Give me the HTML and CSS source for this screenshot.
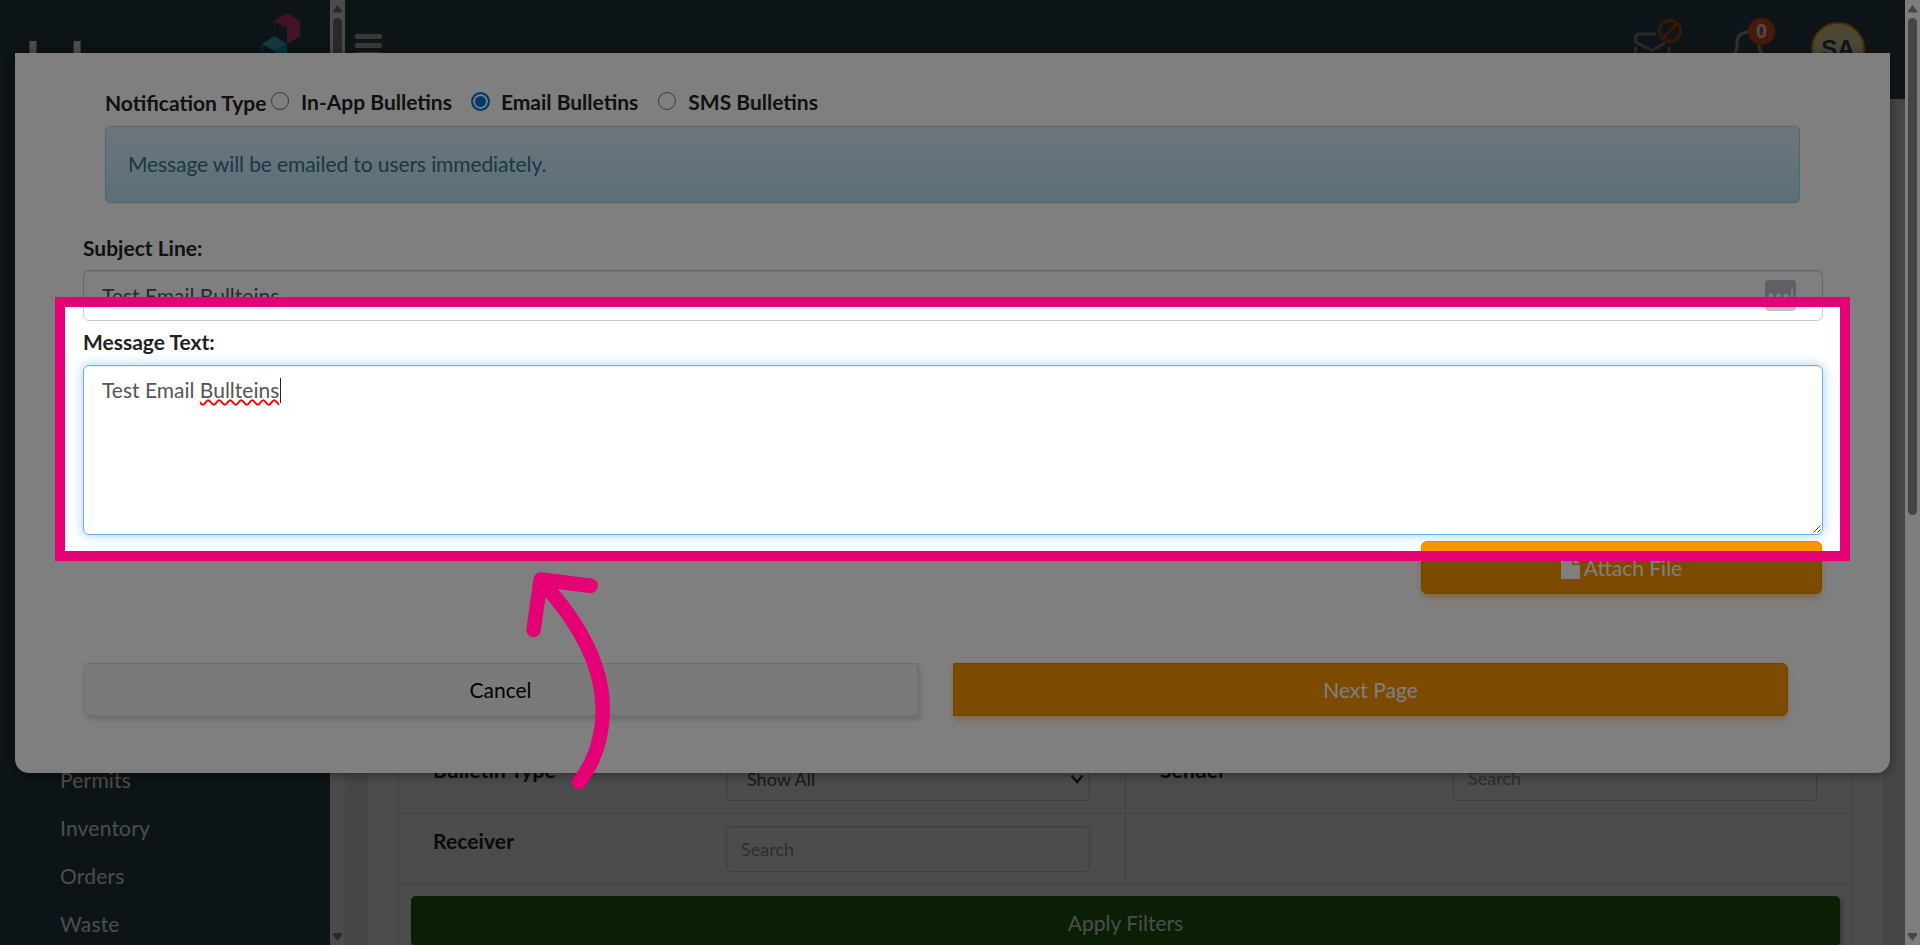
FILE: index.html
```html
<!DOCTYPE html>
<html lang="en">
<head>
    <meta charset="UTF-8">
    <meta name="viewport" content="width=device-width, initial-scale=1.0">
    <title>Bulletins</title>
    <link rel="stylesheet" href="styles.css">
</head>
<body>
    <div class="page">
        <aside class="sidebar">
            <div class="logo">
                <span class="logo-text"><span class="tight">la</span><span class="wide">b</span>case</span>
                <svg class="logo-mark" width="40" height="60" viewBox="0 0 40 60">
                    <path d="M25 0L38 8L25 15L12 8Z" fill="#db3b82"/>
                    <path d="M25 15L38 8V23L25 31Z" fill="#e8407f"/>
                    <path d="M12.500 8V15" stroke="#db3b82"/>
                    <path d="M12.500 23L25 31L12.500 38L0 31Z" fill="#4bb9cb"/>
                    <path d="M12.500 38L25 31V46L12.500 53Z" fill="#00a9c0"/>
                    <path d="M0.500 31V38" stroke="#4bb9cb"/>
                </svg>
            </div>
            <nav class="side-menu">
                <a>Permits</a>
                <a>Inventory</a>
                <a>Orders</a>
                <a>Waste</a>
            </nav>
        </aside>
        <div class="scrollbar">
            <svg width="9" height="8" viewBox="0 0 9 8"><path d="M4.500 0L9 6V7.500H0V6Z"/></svg>
            <div class="thumb side-thumb"></div>
            <svg width="9" height="8" viewBox="0 0 9 8"><path d="M4.500 8L9 2V0H0V2Z"/></svg>
        </div>
        <main class="main">
            <header class="topbar">
                <div class="burger"><i></i><i></i><i></i></div>
                <div class="top-icons">
                    <svg class="mail" width="50" height="46" viewBox="0 0 50 46" fill="none">
                        <path d="M23 15H7Q2.500 15 2.500 19V23L19 31.500L32 24M2.500 28V44M36 28V44" stroke="#848e96" stroke-width="3"/>
                        <circle cx="37" cy="12" r="10.500" stroke="#b8550f" stroke-width="3"/>
                        <path d="M30 19L44 5" stroke="#b8550f" stroke-width="3"/>
                    </svg>
                    <div class="bell">
                        <svg width="34" height="34" viewBox="0 0 34 34" fill="none">
                            <path d="M2 26Q5 23 5 16Q5 4 17 4Q28 4 27 16Q27 23 31 26" stroke="#a5a5a5" stroke-width="3"/>
                        </svg>
                        <span class="badge">0</span>
                    </div>
                    <div class="avatar">SA</div>
                </div>
            </header>
            <section class="card">
                <div class="filters">
                    <div class="cell">
                        <b>Bulletin Type</b>
                        <div class="field select">Show All
                            <svg width="14" height="10" viewBox="0 0 14 10"><path d="M1.500 1.500L7 8L12.500 1.500" fill="none" stroke="#333" stroke-width="2.500"/></svg>
                        </div>
                    </div>
                    <div class="cell">
                        <b>Sender</b>
                        <div class="field">Search</div>
                    </div>
                    <div class="cell">
                        <b>Receiver</b>
                        <div class="field">Search</div>
                    </div>
                    <div class="cell"></div>
                    <div class="apply">Apply Filters</div>
                </div>
            </section>
        </main>
    </div>
    <div class="backdrop"></div>

    <div class="modal">
        <div class="type-row">
            <span class="type-title">Notification Type</span>
            <label><i class="radio"></i>In-App Bulletins</label>
            <label><i class="radio checked"></i>Email Bulletins</label>
            <label><i class="radio"></i>SMS Bulletins</label>
        </div>
        <div class="alert">Message will be emailed to users immediately.</div>
        <div class="form-label">Subject Line:</div>
        <div class="subject">Test Email Bullteins
            <svg width="31" height="31" viewBox="0 0 31 31">
                <rect width="31" height="31" rx="4" fill="#bcc0ca"/>
                <g fill="#fff"><circle cx="6" cy="15.500" r="2.300"/><circle cx="13.500" cy="15.500" r="2.300"/><circle cx="21" cy="15.500" r="2.300"/><path d="M26 9H28V22H26Z"/></g>
            </svg>
        </div>
        <div class="form-label message-label">Message Text:</div>
        <div class="message">Test Email <span class="typo">Bullteins</span><i class="caret"></i>
            <svg class="grip" width="8" height="8" viewBox="0 0 8 8"><path d="M0.500 7.500L7.500 0.500M4.500 7.500L7.500 4.500" stroke="#444"/></svg>
        </div>
        <div class="btn attach">
            <svg width="19" height="22" viewBox="0 0 19 22" fill="#fff"><path d="M0 0H11V8H19V22H0Z"/><path d="M12.500 0L19 6.500H12.500Z"/></svg>
            Attach File
        </div>
        <div class="modal-buttons">
            <div class="btn cancel">Cancel</div>
            <div class="btn next">Next Page</div>
        </div>
    </div>

    <div class="scrollbar window-scroll">
        <svg width="9" height="8" viewBox="0 0 9 8"><path d="M4.500 0L9 6V7.500H0V6Z"/></svg>
        <div class="thumb window-thumb"></div>
        <svg width="9" height="8" viewBox="0 0 9 8"><path d="M4.500 8L9 2V0H0V2Z"/></svg>
    </div>

    <div class="highlight"></div>
    <svg class="arrow" width="90" height="230" viewBox="0 0 90 230">
        <path d="M55 219C72 197 78.700 172 78.700 146C78.700 100 54 58 17 18M66.700 22.700L16.700 16.500L9.500 67"/>
    </svg>
</body>
</html>
```
FILE: styles.css
```css
* {
    box-sizing: border-box;
}

body {
    margin: 0;
    height: 945px;
    overflow: hidden;
    position: relative;
    font-family: Lato, "Liberation Sans", sans-serif;
    font-size: 21px;
    line-height: 30px;
    color: #222;
}

.page {
    display: flex;
    height: 945px;
}

.sidebar {
    width: 330px;
    flex-shrink: 0;
    background: #28434f;
    display: flex;
    flex-direction: column;
    justify-content: space-between;
}

.logo {
    display: flex;
    padding: 13px 0 0 26px;
}

.logo-text {
    width: 236px;
    padding-top: 33px;
    color: #fff;
    font-size: 56px;
    letter-spacing: 11px;
    font-weight: bold;
}

.tight {
    letter-spacing: 1px;
}

.wide {
    letter-spacing: 15px;
}

.side-menu {
    padding: 0 0 1px 60px;
    letter-spacing: 0.2px;
}

.side-menu a {
    display: block;
    height: 48px;
    padding-top: 9px;
    color: #fff;
}

.side-menu a:last-child {
    height: 44px;
}

.scrollbar {
    width: 15px;
    flex-shrink: 0;
    background: #fcfcfc;
    display: flex;
    flex-direction: column;
    align-items: center;
    padding: 5px 0 4px;
    fill: #8b8b8b;
}

.thumb {
    width: 9px;
    margin-top: 5px;
    margin-bottom: auto;
    border-radius: 5px;
    background: #8b8b8b;
}

.side-thumb {
    height: 420px;
}

.window-thumb {
    height: 497px;
}

.window-scroll {
    position: absolute;
    top: 0;
    right: 0;
    height: 945px;
}

.main {
    flex: 1;
    margin-right: 15px;
    background: #e9e9eb;
    display: flex;
    flex-direction: column;
}

.topbar {
    height: 99px;
    flex-shrink: 0;
    background: #314754;
    display: flex;
    justify-content: space-between;
    padding: 0 40px 0 10px;
}

.burger {
    padding-top: 34px;
}

.burger i {
    display: block;
    width: 27px;
    height: 5px;
    margin-bottom: 4px;
    border-radius: 2px;
    background: #c0c0c4;
}

.top-icons {
    display: flex;
}

.mail {
    margin: 19px 49px 0 0;
}

.bell {
    position: relative;
    width: 79px;
    padding-top: 28px;
}

.badge {
    position: absolute;
    left: 16px;
    top: 18px;
    width: 27px;
    height: 27px;
    border-radius: 50%;
    background: #ea5426;
    color: #fff;
    font: bold 20px/27px "Liberation Sans", sans-serif;
    text-align: center;
}

.avatar {
    width: 54px;
    height: 54px;
    margin-top: 22px;
    border: 2px solid #f29c00;
    border-radius: 50%;
    background: #ffecb3;
    color: #314754;
    font: bold 24px/50px "Liberation Sans", sans-serif;
    text-align: center;
}

.card {
    flex: 1;
    margin: 0 22px 0 23px;
    padding: 644px 30px 0;
    background: #fff;
}

.filters {
    display: grid;
    grid-template-columns: 727px 1fr;
    grid-template-rows: 71px 70px 62px;
    border-left: 1px solid #ddd;
    border-right: 1px solid #ddd;
}

.cell {
    display: flex;
    padding: 12px 35px 0 34px;
    border-bottom: 1px solid #ddd;
}

.cell:nth-child(odd) {
    border-right: 1px solid #ddd;
}

.cell b {
    flex: 1;
    letter-spacing: 0.1px;
}

.field {
    display: flex;
    align-items: center;
    width: 364px;
    height: 46px;
    padding: 0 14px;
    border: 1px solid #ccc;
    border-radius: 5px;
    box-shadow: inset 0 1px 1px rgba(0, 0, 0, 0.075);
    color: #999;
    font-size: 18px;
}

.select {
    justify-content: space-between;
    padding: 1px 5px 0 20px;
    color: #555;
}

.apply {
    grid-column: 1 / 3;
    margin: 12px 12px 0 12px;
    padding-top: 12px;
    border-radius: 5px;
    background: #22680d;
    box-shadow: 2px 3px 5px rgba(0, 0, 0, 0.3);
    color: #fff;
    text-align: center;
}

.backdrop {
    position: absolute;
    inset: 0 15px 0 0;
    background: rgba(0, 0, 0, 0.4);
}

.modal {
    position: absolute;
    left: 15px;
    top: 53px;
    width: 1875px;
    height: 720px;
    padding: 34px 67px 0 68px;
    border-radius: 0 0 14px 14px;
    background: #fff;
    box-shadow: 0 2px 12px rgba(0, 0, 0, 0.4);
}

.type-row {
    display: flex;
    height: 39px;
    padding-left: 22px;
    font-weight: bold;
}

.type-title {
    width: 166px;
    padding-top: 1px;
}

.type-row label {
    display: flex;
    margin-right: 20px;
}

.radio {
    width: 18px;
    height: 18px;
    margin: 5px 12px 0 0;
    border: 1px solid #767676;
    border-radius: 50%;
}

.checked {
    width: 19px;
    height: 19px;
    margin: 5px 11px 0 -1px;
    border: 2px solid #0075d0;
    background: #0075d0;
    box-shadow: inset 0 0 0 2px #fff;
}

.alert {
    height: 77px;
    margin: 0 23px 30px 22px;
    padding: 22px;
    border: 1px solid #9acfea;
    border-radius: 5px;
    background: linear-gradient(#d9edf7, #b9def0);
    box-shadow: inset 0 1px 0 rgba(255, 255, 255, 0.25), 0 1px 2px rgba(0, 0, 0, 0.05);
    color: #31708f;
    letter-spacing: -0.1px;
    text-shadow: 0 1px 0 rgba(255, 255, 255, 0.2);
}

.form-label {
    height: 37px;
    font-weight: bold;
}

.subject {
    display: flex;
    justify-content: space-between;
    align-items: center;
    height: 51px;
    padding: 0 26px 0 18px;
    border: 1px solid #ccc;
    border-radius: 6px;
    box-shadow: inset 0 1px 1px rgba(0, 0, 0, 0.075);
    color: #555;
}

.message-label {
    height: 44px;
    padding-top: 6px;
}

.message {
    position: relative;
    height: 170px;
    padding: 9px 18px;
    border: 1px solid #66afe9;
    border-radius: 6px;
    box-shadow: inset 0 1px 1px rgba(0, 0, 0, 0.075), 0 0 12px rgba(102, 175, 233, 0.6);
    color: #555;
}

.typo {
    text-decoration: underline wavy #f00 1.5px;
    text-decoration-skip-ink: none;
}

.caret {
    display: inline-block;
    width: 1px;
    height: 25px;
    margin-left: 1px;
    background: #222;
    vertical-align: -5px;
}

.grip {
    position: absolute;
    right: 1px;
    bottom: 1px;
}

.btn {
    height: 53px;
    border: 1px solid #e08600;
    background: #f99600;
    box-shadow: 0 4px 6px rgba(249, 150, 0, 0.4);
    color: #fff;
    line-height: 51px;
    text-align: center;
}

.attach {
    display: flex;
    justify-content: center;
    align-items: center;
    gap: 4px;
    width: 401px;
    margin: 6px 1px 0 auto;
    border-radius: 6px;
}

.modal-buttons {
    display: flex;
    gap: 35px;
    padding: 69px 35px 0 0;
}

.modal-buttons .btn {
    flex: 1;
}

.modal-buttons .cancel {
    border-color: #ddd;
    border-radius: 6px 0 0 6px;
    background: #f5f5f5;
    box-shadow: 3px 4px 5px rgba(0, 0, 0, 0.15);
    color: #000;
}

.next {
    border-radius: 0 6px 6px 0;
}

/* tutorial spotlight */
.highlight {
    position: absolute;
    left: 55px;
    top: 297px;
    width: 1795px;
    height: 264px;
    border: 10px solid #e50076;
    box-shadow: 0 0 0 2000px rgba(0, 0, 0, 0.5);
}

.arrow {
    position: absolute;
    left: 524px;
    top: 563px;
    fill: none;
    stroke: #e50076;
    stroke-width: 14.5;
    stroke-linecap: round;
    stroke-linejoin: round;
}
```
